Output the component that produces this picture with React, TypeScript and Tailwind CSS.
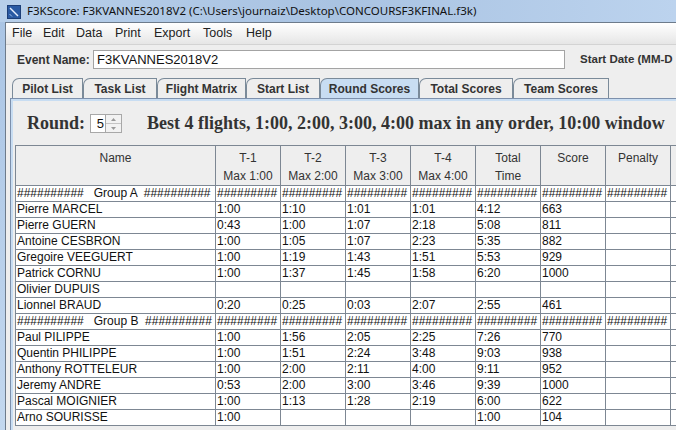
import React from 'react'

const FONT = { fontFamily: '"Liberation Sans", Arial, sans-serif' }
const SERIF = { fontFamily: '"Liberation Serif", "Times New Roman", serif' }

const TABS = [
  { label: 'Pilot List', w: 71 },
  { label: 'Task List', w: 74 },
  { label: 'Flight Matrix', w: 89 },
  { label: 'Start List', w: 74 },
  { label: 'Round Scores', w: 99, active: true },
  { label: 'Total Scores', w: 94 },
  { label: 'Team Scores', w: 96 },
]

const MENU = [
  { label: 'File', w: 31 },
  { label: 'Edit', w: 33 },
  { label: 'Data', w: 39 },
  { label: 'Print', w: 39 },
  { label: 'Export', w: 49 },
  { label: 'Tools', w: 43 },
  { label: 'Help', w: 40 },
]

const COLS = [200, 65, 65, 65, 65, 65, 65, 65, 60]

type Row = string[] | 'A' | 'B'

const ROWS: Row[] = [
  'A',
  ['Pierre MARCEL', '1:00', '1:10', '1:01', '1:01', '4:12', '663', ''],
  ['Pierre GUERN', '0:43', '1:00', '1:07', '2:18', '5:08', '811', ''],
  ['Antoine CESBRON', '1:00', '1:05', '1:07', '2:23', '5:35', '882', ''],
  ['Gregoire VEEGUERT', '1:00', '1:19', '1:43', '1:51', '5:53', '929', ''],
  ['Patrick CORNU', '1:00', '1:37', '1:45', '1:58', '6:20', '1000', ''],
  ['Olivier DUPUIS', '', '', '', '', '', '', ''],
  ['Lionnel BRAUD', '0:20', '0:25', '0:03', '2:07', '2:55', '461', ''],
  'B',
  ['Paul PILIPPE', '1:00', '1:56', '2:05', '2:25', '7:26', '770', ''],
  ['Quentin PHILIPPE', '1:00', '1:51', '2:24', '3:48', '9:03', '938', ''],
  ['Anthony ROTTELEUR', '1:00', '2:00', '2:11', '4:00', '9:11', '952', ''],
  ['Jeremy ANDRE', '0:53', '2:00', '3:00', '3:46', '9:39', '1000', ''],
  ['Pascal MOIGNIER', '1:00', '1:13', '1:28', '2:19', '6:00', '622', ''],
  ['Arno SOURISSE', '1:00', '', '', '', '1:00', '104', ''],
]

const HEAD: [string, string][] = [
  ['Name', ''],
  ['T-1', 'Max 1:00'],
  ['T-2', 'Max 2:00'],
  ['T-3', 'Max 3:00'],
  ['T-4', 'Max 4:00'],
  ['Total', 'Time'],
  ['Score', ''],
  ['Penalty', ''],
  ['', ''],
]

export default function App() {
  return (
    <div className="w-[676px] h-[430px] overflow-hidden flex flex-col bg-gradient-to-b from-[#a9c4e4] to-[#c3d8ef]" style={FONT}>
      <TitleBar />
      <div className="flex flex-1 min-h-0">
        <div className="w-[5px] shrink-0" />
        <div className="flex-1 min-w-0 flex flex-col border-l border-t border-[#6d7b8b] bg-[#eeeeee] overflow-hidden">
          <MenuBar />
          <EventRow />
          <TabStrip />
          <Panel />
        </div>
      </div>
    </div>
  )
}

function TitleBar() {
  return (
    <div className="h-[22px] shrink-0 flex items-center bg-gradient-to-r from-[#b7cfea] via-[#a9c3e2] to-[#bcd3ee]">
      <svg width="14" height="14" viewBox="0 0 14 14" className="ml-[7px] mr-[6px] mt-[1px]">
        <rect x="0" y="0" width="14" height="14" fill="#1d3f78" />
        <rect x="1" y="1" width="12" height="12" fill="#2a5aa3" />
        <line x1="3" y1="3" x2="11" y2="11" stroke="#e8f0ff" strokeWidth="1.4" />
        <line x1="2.5" y1="9" x2="5" y2="11.5" stroke="#9fc0ef" strokeWidth="1" />
      </svg>
      <span className="text-[11.5px] text-[#111] whitespace-nowrap" style={{ fontFamily: '"Noto Sans", "Open Sans", sans-serif' }}>
        F3KScore: F3KVANNES2018V2 (C:\Users\journaiz\Desktop\CONCOURSF3KFINAL.f3k)
      </span>
    </div>
  )
}

function MenuBar() {
  return (
    <div className="h-[22px] shrink-0 flex items-center pl-[6px] bg-gradient-to-b from-white to-[#e6e6e6] border-b border-[#d3d3d3]">
      {MENU.map((m) => (
        <span key={m.label} className="text-[12.5px] text-[#222] shrink-0" style={{ width: m.w }}>{m.label}</span>
      ))}
    </div>
  )
}

function EventRow() {
  return (
    <div className="h-[32px] shrink-0 flex items-start pt-[5px] pl-[11px] whitespace-nowrap">
      <div className="flex items-center h-[19px]">
        <span className="text-[12px] font-bold text-[#333] w-[76px]">Event Name:</span>
        <div className="w-[472px] h-[19px] bg-white border border-[#a3a3a3] flex items-center pl-[3px] text-[13px] text-[#111]">
          F3KVANNES2018V2
        </div>
        <span className="ml-[15px] text-[11.5px] font-bold text-[#333]">Start Date (MM-D</span>
      </div>
    </div>
  )
}

function TabStrip() {
  return (
    <div className="h-[20px] shrink-0 flex items-end pl-[6px] mt-[1px]">
      {TABS.map((t) => (
        <div
          key={t.label}
          className={`h-[20px] shrink-0 flex items-center justify-center border-t border-l border-r border-[#7a8a99] rounded-tl-[7px] text-[12px] font-bold text-[#333] whitespace-nowrap ${t.active ? 'bg-[#c8ddf2]' : 'bg-[#eeeeee]'}`}
          style={{ width: t.w }}
        >
          {t.label}
        </div>
      ))}
    </div>
  )
}

function Panel() {
  return (
    <div className="flex-1 min-h-0 ml-[4px] border-l border-t border-[#7d90ac]">
      <div className="h-full border-l-2 border-t-2 border-[#c8ddf2] flex flex-col">
        <div className="h-[44px] shrink-0 flex items-center pl-[14px] text-[#333] whitespace-nowrap" style={SERIF}>
          <span className="text-[18px] font-bold">Round:</span>
          <Spinner />
          <span className="ml-[25px] text-[18px] font-bold">Best 4 flights, 1:00, 2:00, 3:00, 4:00 max in any order, 10:00 window</span>
        </div>
        <ScoreTable />
      </div>
    </div>
  )
}

function Spinner() {
  return (
    <div className="ml-[5px] mt-[1px] flex h-[19px] border border-[#a8a8a8] bg-white" style={FONT}>
      <div className="w-[14px] flex items-center justify-end pr-[1px] text-[13px] text-[#111]">5</div>
      <div className="w-[16px] flex flex-col border-l border-[#a8a8a8] bg-[#f2f2f2]">
        <div className="flex-1 flex items-center justify-center border-b border-[#c4c4c4]">
          <svg width="5" height="3" viewBox="0 0 5 3"><path d="M2.5 0 L5 3 L0 3 Z" fill="#9a9a9a" /></svg>
        </div>
        <div className="flex-1 flex items-center justify-center">
          <svg width="5" height="3" viewBox="0 0 5 3"><path d="M0 0 L5 0 L2.5 3 Z" fill="#9a9a9a" /></svg>
        </div>
      </div>
    </div>
  )
}

function ScoreTable() {
  return (
    <div className="ml-[2px] border-l border-t border-[#7d8793] text-[12px] w-max">
      <div className="flex bg-[#eeeeee] text-[#333]">
        {HEAD.map(([a, b], i) => (
          <div key={i} className="h-[40px] shrink-0 border-r border-b border-[#7d8793] flex flex-col items-center pt-[3px] leading-[18px]" style={{ width: COLS[i] }}>
            <span>{a}</span>
            <span>{b}</span>
          </div>
        ))}
      </div>
      {ROWS.map((r, ri) => (
        <div key={ri} className="flex bg-white text-[#111]">
          {typeof r === 'string'
            ? COLS.map((w, i) => (
                <Cell key={i} w={w}>
                  {i === 0 ? `##########   Group ${r}  ##########` : i === COLS.length - 1 ? '' : '#########'}
                </Cell>
              ))
            : COLS.map((w, i) => <Cell key={i} w={w}>{r[i] ?? ''}</Cell>)}
        </div>
      ))}
    </div>
  )
}

function Cell({ w, children }: { w: number; children: React.ReactNode }) {
  return (
    <div className="h-[16px] shrink-0 border-r border-b border-[#7d8793] pl-[1px] leading-[15px] whitespace-pre overflow-hidden" style={{ width: w }}>
      {children}
    </div>
  )
}
